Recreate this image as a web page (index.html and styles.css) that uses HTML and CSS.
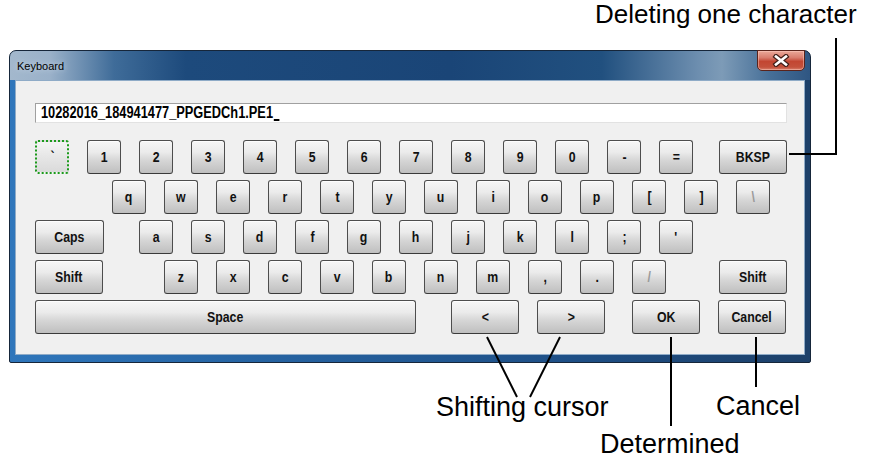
FILE: index.html
```html
<!DOCTYPE html>
<html lang="en">
<head>
    <meta charset="UTF-8">
    <meta name="viewport" content="width=device-width, initial-scale=1.0">
    <title>Keyboard</title>
    <link rel="stylesheet" href="styles.css">
</head>
<body>
    <div class="page">
        <div class="window">
            <div class="titlebar">
                <span class="title">Keyboard</span>
                <button class="close" aria-label="Close">
                    <svg width="18" height="13" viewBox="0 0 18 13">
                        <path d="M4 2.5 L14 10.5 M14 2.5 L4 10.5" stroke="#43201a" stroke-width="5" stroke-linecap="square"/>
                        <path d="M4 2.5 L14 10.5 M14 2.5 L4 10.5" stroke="#ffffff" stroke-width="2.6" stroke-linecap="square"/>
                    </svg>
                </button>
            </div>
            <div class="client">
                <div class="entry"><span class="narrow">10282016_184941477_PPGEDCh1.PE1<span class="caret"></span></span></div>

                <div class="keys">
                    <div class="row">
                        <button class="key focus"><span>`</span></button>
                        <button class="key"><span>1</span></button>
                        <button class="key"><span>2</span></button>
                        <button class="key"><span>3</span></button>
                        <button class="key"><span>4</span></button>
                        <button class="key"><span>5</span></button>
                        <button class="key"><span>6</span></button>
                        <button class="key"><span>7</span></button>
                        <button class="key"><span>8</span></button>
                        <button class="key"><span>9</span></button>
                        <button class="key"><span>0</span></button>
                        <button class="key"><span>-</span></button>
                        <button class="key"><span>=</span></button>
                        <button class="key wide bksp"><span>BKSP</span></button>
                    </div>
                    <div class="row row-q">
                        <button class="key"><span>q</span></button>
                        <button class="key"><span>w</span></button>
                        <button class="key"><span>e</span></button>
                        <button class="key"><span>r</span></button>
                        <button class="key"><span>t</span></button>
                        <button class="key"><span>y</span></button>
                        <button class="key"><span>u</span></button>
                        <button class="key"><span>i</span></button>
                        <button class="key"><span>o</span></button>
                        <button class="key"><span>p</span></button>
                        <button class="key"><span>[</span></button>
                        <button class="key"><span>]</span></button>
                        <button class="key" disabled><span>\</span></button>
                    </div>
                    <div class="row">
                        <button class="key caps"><span>Caps</span></button>
                        <button class="key"><span>a</span></button>
                        <button class="key"><span>s</span></button>
                        <button class="key"><span>d</span></button>
                        <button class="key"><span>f</span></button>
                        <button class="key"><span>g</span></button>
                        <button class="key"><span>h</span></button>
                        <button class="key"><span>j</span></button>
                        <button class="key"><span>k</span></button>
                        <button class="key"><span>l</span></button>
                        <button class="key"><span>;</span></button>
                        <button class="key"><span>'</span></button>
                    </div>
                    <div class="row">
                        <button class="key wide shift-left"><span>Shift</span></button>
                        <button class="key"><span>z</span></button>
                        <button class="key"><span>x</span></button>
                        <button class="key"><span>c</span></button>
                        <button class="key"><span>v</span></button>
                        <button class="key"><span>b</span></button>
                        <button class="key"><span>n</span></button>
                        <button class="key"><span>m</span></button>
                        <button class="key"><span>,</span></button>
                        <button class="key"><span>.</span></button>
                        <button class="key" disabled><span>/</span></button>
                        <button class="key wide shift-right"><span>Shift</span></button>
                    </div>
                    <div class="row">
                        <button class="key space"><span>Space</span></button>
                        <button class="key wide left"><span>&lt;</span></button>
                        <button class="key wide"><span>&gt;</span></button>
                        <button class="key wide ok"><span>OK</span></button>
                        <button class="key wide"><span>Cancel</span></button>
                    </div>
                </div>
            </div>
        </div>

        <svg class="leaders" width="876" height="461" viewBox="0 0 876 461">
            <polyline points="789,154 836,154 836,38" fill="none" stroke="#000" stroke-width="2"/>
            <line x1="487" y1="337" x2="517" y2="397" stroke="#000" stroke-width="2"/>
            <line x1="560" y1="337" x2="530" y2="397" stroke="#000" stroke-width="2"/>
            <line x1="671" y1="337" x2="671" y2="426" stroke="#000" stroke-width="2"/>
            <line x1="756" y1="337" x2="756" y2="387" stroke="#000" stroke-width="2"/>
        </svg>

        <span class="note note-bksp">Deleting one character</span>
        <span class="note note-cursor">Shifting cursor</span>
        <span class="note note-cancel">Cancel</span>
        <span class="note note-ok">Determined</span>
    </div>
</body>
</html>
```

FILE: styles.css
```css
body {
    margin: 0;
    background: #fff;
    font-family: "Liberation Sans", Arial, sans-serif;
}

.page {
    position: relative;
    width: 876px;
    height: 461px;
    padding: 50px 0 0 9px;
    box-sizing: border-box;
    overflow: hidden;
}

/* window frame */
.window {
    width: 802px;
    box-sizing: border-box;
    border: 1px solid #16263a;
    border-radius: 7px 7px 2px 2px;
    padding: 0 5px 7px 5px;
    background:
        linear-gradient(to right, #a3b8cd 0%, #9ab1c9 5%, #3f6c99 13%, #1d4a7c 22%, #1a4577 55%, #21507f 74%, #6d8eaf 86%, #7d9bb7 89%, #466f98 95%, #2f5682 100%) 0 0 / 100% 29px no-repeat,
        linear-gradient(to right, #2f76bb 0%, #2664a3 30%, #1e4f86 70%, #1d4069 100%);
}

.titlebar {
    height: 29px;
    display: flex;
    justify-content: space-between;
    align-items: flex-start;
}

.title {
    margin: 9px 0 0 2px;
    font-size: 11px;
    color: #000;
    text-shadow: 0 0 6px rgba(220, 232, 245, 0.9);
}

.close {
    width: 48px;
    height: 21px;
    margin-top: -1px;
    padding: 0;
    border: 1px solid #5a231b;
    border-radius: 0 0 5px 5px;
    background: linear-gradient(#eaa899 0%, #d97d6e 35%, #c24632 55%, #c4513c 85%, #d8806e 100%);
    box-shadow: inset 0 0 0 1px rgba(255, 210, 200, 0.45);
    display: flex;
    align-items: center;
    justify-content: center;
}

.client {
    background: #f0f0f0;
    border: 1px solid #8fabc7;
    padding: 22px 0 20px 19px;
}

.entry {
    width: 752px;
    height: 20px;
    box-sizing: border-box;
    background: #fff;
    border: 1px solid #e2e2e2;
    border-top-color: #a0a0a0;
    border-left-color: #a0a0a0;
    padding: 0 0 0 5px;
    font: bold 16px "Liberation Sans", Arial, sans-serif;
    line-height: 18px;
    color: #000;
    margin-bottom: 17px;
    white-space: nowrap;
}

.narrow {
    display: inline-block;
    transform: scaleX(0.8);
    transform-origin: left center;
}

.caret {
    display: inline-block;
    width: 7px;
    height: 2px;
    background: #000;
    margin-left: 1px;
    vertical-align: -3px;
}

/* keys */
.keys {
    display: flex;
    flex-direction: column;
    gap: 6px;
}

.row {
    display: flex;
    gap: 18px;
}

.row-q {
    margin-left: 77px;
}

.key {
    width: 34px;
    height: 34px;
    padding: 0 0 2px 0;
    border: 1px solid #4d4d4d;
    border-bottom-color: #3a3a3a;
    border-radius: 3px;
    background: linear-gradient(#f6f6f6 0%, #ebebeb 35%, #d6d6d6 60%, #bfbfbf 100%);
    box-shadow: inset 0 1px 0 #fdfdfd;
    font: bold 15px "Liberation Sans", Arial, sans-serif;
    color: #111;
    white-space: nowrap;
}

.key span {
    display: inline-block;
    transform: scaleX(0.82);
}

.key:disabled {
    color: #9a9a9a;
}

.key.focus {
    border: 2px dotted #1c9a1c;
    background: linear-gradient(#f4f4f4, #e6e6e6 50%, #dadada);
    box-shadow: none;
}

.wide {
    width: 68px;
}

.caps {
    width: 69px;
    margin-right: 17px;
}

.bksp {
    margin-left: 8px;
}

.shift-left {
    margin-right: 43px;
}

.shift-right {
    margin-left: 35px;
}

.space {
    width: 381px;
    margin-right: 17px;
}

.ok {
    margin-left: 9px;
}

/* callouts */
.leaders {
    position: absolute;
    left: 0;
    top: 0;
}

.note {
    position: absolute;
    font-size: 27px;
    line-height: 1;
    color: #000;
    white-space: nowrap;
}

.note-bksp {
    left: 595px;
    top: 1px;
    font-size: 26px;
}

.note-cursor {
    left: 436px;
    top: 394px;
}

.note-cancel {
    left: 716px;
    top: 393px;
}

.note-ok {
    left: 600px;
    top: 431px;
}
```
